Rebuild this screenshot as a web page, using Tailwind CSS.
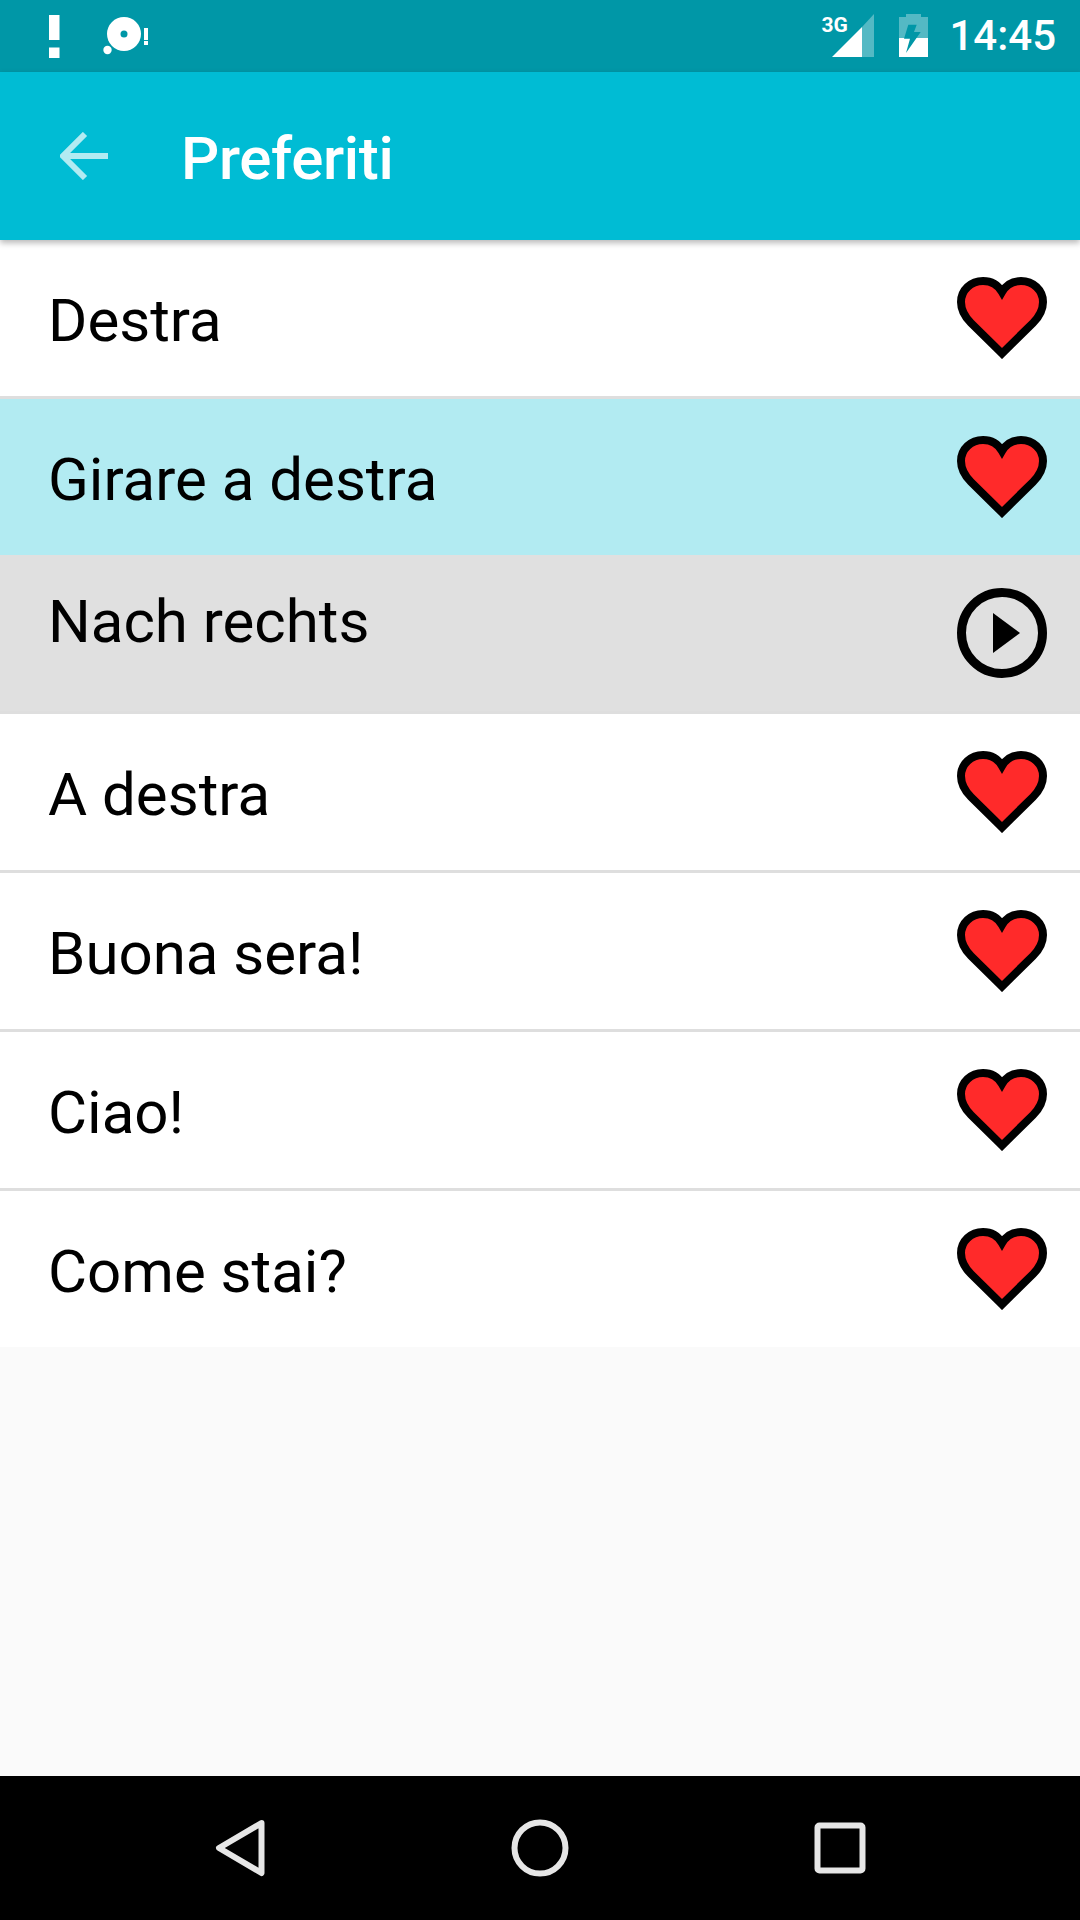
<!DOCTYPE html>
<html><head><meta charset="utf-8"><script src="https://cdn.jsdelivr.net/npm/@tailwindcss/browser@4"></script></head>
<body class="m-0">
<div class="w-[1080px] h-[1920px] flex flex-col bg-[#fafafa] font-['Roboto',sans-serif] overflow-hidden relative">
  <div class="h-[72px] shrink-0 bg-[#0097a7] flex items-center relative text-white">
    <svg class="ml-[49px]" width="11" height="43" viewBox="0 0 11 43"><path d="M0 0h10.500v25H0zM0 32.500h10.500v10.500H0z" fill="#fff"/></svg>
    <svg class="ml-[43px]" width="46" height="42" viewBox="0 0 46 42"><circle cx="21" cy="19" r="17" fill="#fff"/><circle cx="21" cy="19" r="3.500" fill="#0097a7"/><circle cx="4.500" cy="35" r="4.200" fill="#fff"/><path d="M41 13h4v12h-4zM41 26h4v4h-4z" fill="#fff"/></svg>
    <div class="ml-auto flex items-center">
      <div class="relative w-[52px] h-[44px]">
        <span class="absolute left-[-1px] top-[-4px] text-[21px] leading-[30px] font-bold">3G</span>
        <svg class="absolute left-[10px] top-0" width="43" height="43" viewBox="0 0 43 43"><path d="M0 43 30 13v30z" fill="#fff"/><path d="M30 13 42 0v43H30z" fill="#fff" fill-opacity=".33"/></svg>
      </div>
      <svg class="ml-[25px]" width="29" height="44" viewBox="0 0 29 44"><path d="M7 0h15v3h7v21H0V3h7z" fill="#fff" fill-opacity=".33"/><path d="M0 24h29v19H0z" fill="#fff"/><path d="M9.300 10.700h8.400L15 18h6.700L7 39l4-14.300H5z" fill="#0097a7"/></svg>
      <span class="ml-[21px] mr-[24px] text-[42px] leading-none font-medium">14:45</span>
    </div>
  </div>
  <div class="h-[168px] shrink-0 bg-[#00bcd4] flex items-center relative shadow-[0_3px_6px_rgba(0,0,0,0.28)] z-10">
    <svg class="ml-[60px]" width="48" height="48" viewBox="0 0 48 48"><path d="M49 24H4M25 2 3 24l22 22" fill="none" stroke="#b2ebf2" stroke-width="6"/></svg>
    <span class="ml-[73px] mt-[5px] text-[60px] leading-none font-medium tracking-[-0.35px] text-white">Preferiti</span>
  </div>
  <div class="flex flex-col">
    <div class="h-[159px] bg-white border-b-[3px] border-[#dedede] flex items-center justify-between pl-[48px] pr-[33px]"><span class="text-[60px] leading-none text-black mt-[5px]">Destra</span>
      <svg width="90" height="82" viewBox="0 0 90 82"><path d="M45 76.500 14 46C7 39 4 32 4 25 4 13 14 4 26 4 34 4 41 8 45 15 49 8 56 4 64 4 76 4 86 13 86 25 86 32 83 39 76 46Z" fill="#ff2a2a" stroke="#000" stroke-width="8"/></svg></div>
    <div class="h-[156px] bg-[#b2ebf2] flex items-center justify-between pl-[48px] pr-[33px]"><span class="text-[60px] leading-none text-black mt-[5px]">Girare a destra</span>
      <svg width="90" height="82" viewBox="0 0 90 82"><path d="M45 76.500 14 46C7 39 4 32 4 25 4 13 14 4 26 4 34 4 41 8 45 15 49 8 56 4 64 4 76 4 86 13 86 25 86 32 83 39 76 46Z" fill="#ff2a2a" stroke="#000" stroke-width="8"/></svg></div>
    <div class="h-[159px] bg-[#e0e0e0] border-b-[3px] border-[#dedede] flex items-center justify-between pl-[48px] pr-[33px]"><span class="text-[60px] leading-none text-black mt-[-22px]">Nach rechts</span>
      <svg width="90" height="90" viewBox="0 0 90 90"><circle cx="45" cy="45" r="40.500" fill="none" stroke="#000" stroke-width="9"/><path d="M36 25l27 20-27 20z" fill="#000"/></svg></div>
    <div class="h-[159px] bg-white border-b-[3px] border-[#dedede] flex items-center justify-between pl-[48px] pr-[33px]"><span class="text-[60px] leading-none text-black mt-[5px]">A destra</span>
      <svg width="90" height="82" viewBox="0 0 90 82"><path d="M45 76.500 14 46C7 39 4 32 4 25 4 13 14 4 26 4 34 4 41 8 45 15 49 8 56 4 64 4 76 4 86 13 86 25 86 32 83 39 76 46Z" fill="#ff2a2a" stroke="#000" stroke-width="8"/></svg></div>
    <div class="h-[159px] bg-white border-b-[3px] border-[#dedede] flex items-center justify-between pl-[48px] pr-[33px]"><span class="text-[60px] leading-none text-black mt-[5px]">Buona sera!</span>
      <svg width="90" height="82" viewBox="0 0 90 82"><path d="M45 76.500 14 46C7 39 4 32 4 25 4 13 14 4 26 4 34 4 41 8 45 15 49 8 56 4 64 4 76 4 86 13 86 25 86 32 83 39 76 46Z" fill="#ff2a2a" stroke="#000" stroke-width="8"/></svg></div>
    <div class="h-[159px] bg-white border-b-[3px] border-[#dedede] flex items-center justify-between pl-[48px] pr-[33px]"><span class="text-[60px] leading-none text-black mt-[5px]">Ciao!</span>
      <svg width="90" height="82" viewBox="0 0 90 82"><path d="M45 76.500 14 46C7 39 4 32 4 25 4 13 14 4 26 4 34 4 41 8 45 15 49 8 56 4 64 4 76 4 86 13 86 25 86 32 83 39 76 46Z" fill="#ff2a2a" stroke="#000" stroke-width="8"/></svg></div>
    <div class="h-[156px] bg-white flex items-center justify-between pl-[48px] pr-[33px]"><span class="text-[60px] leading-none text-black mt-[5px]">Come stai?</span>
      <svg width="90" height="82" viewBox="0 0 90 82"><path d="M45 76.500 14 46C7 39 4 32 4 25 4 13 14 4 26 4 34 4 41 8 45 15 49 8 56 4 64 4 76 4 86 13 86 25 86 32 83 39 76 46Z" fill="#ff2a2a" stroke="#000" stroke-width="8"/></svg></div>
  </div>
  <div class="mt-auto h-[144px] bg-black relative">
    <svg class="absolute left-[214px] top-[42px]" width="52" height="60" viewBox="0 0 52 60"><path d="M47.500 5 5 30l42.500 25z" fill="none" stroke="#e6e6e6" stroke-width="6" stroke-linejoin="round"/></svg>
    <svg class="absolute left-[510px] top-[42px]" width="60" height="60" viewBox="0 0 60 60"><circle cx="30" cy="30" r="25.500" fill="none" stroke="#e6e6e6" stroke-width="6"/></svg>
    <svg class="absolute left-[814px] top-[46px]" width="52" height="52" viewBox="0 0 52 52"><rect x="3.500" y="3.500" width="45" height="45" rx="2" fill="none" stroke="#e6e6e6" stroke-width="6"/></svg>
  </div>
</div>
</body></html>
